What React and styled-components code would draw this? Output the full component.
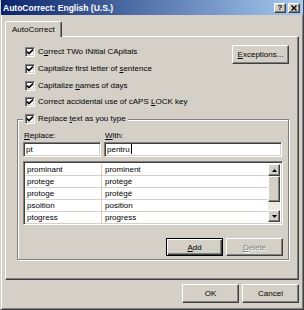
import React from 'react';
import styled, { createGlobalStyle, css } from 'styled-components';

const GlobalStyle = createGlobalStyle`
  html, body { margin: 0; padding: 0; background: #d4d0c8; }
  body { width: 304px; height: 310px; overflow: hidden; font-family: "Liberation Sans", Arial, sans-serif; color: #000; }
  * { box-sizing: border-box; }
`;

const raised = css`
  border: 1px solid;
  border-color: #fff #404040 #404040 #fff;
  box-shadow: inset -1px -1px 0 #808080;
  background: #d4d0c8;
`;

const sunken = css`
  border: 1px solid;
  border-color: #808080 #fff #fff #808080;
  box-shadow: inset 1px 1px 0 #404040, inset -1px -1px 0 #d4d0c8;
  background: #fff;
`;

const Window = styled.div`
  width: 304px;
  height: 310px;
  background: #d4d0c8;
  border-style: solid;
  border-width: 0 1px 1px 1px;
  border-color: #d4d0c8 #404040 #404040 #d4d0c8;
  box-shadow: inset 1px 0 0 #fff, inset -1px -1px 0 #808080;
  display: flex;
  flex-direction: column;
`;

const TitleBar = styled.div`
  height: 15px;
  flex: none;
  display: flex;
  align-items: center;
  justify-content: space-between;
  padding: 0 3px 0 2px;
  background: linear-gradient(to right, #0a246a, #a6caf0);
`;

const TitleText = styled.span`
  color: #fff;
  font-weight: bold;
  font-size: 8.5px;
  white-space: nowrap;
`;

const CaptionButtons = styled.div`
  display: flex;
  gap: 2px;
`;

const CaptionButton = styled.div`
  ${raised};
  width: 12px;
  height: 10px;
  display: flex;
  align-items: center;
  justify-content: center;
  font-size: 8px;
  font-weight: bold;
  line-height: 1;
`;

const Content = styled.div`
  padding: 6px 4px 0 4px;
  display: flex;
  flex-direction: column;
`;

const TabStrip = styled.div`
  display: flex;
  height: 16px;
  position: relative;
  z-index: 1;
  margin-bottom: -1px;
`;

const Tab = styled.div`
  width: 57px;
  height: 16px;
  border: 1px solid;
  border-bottom: none;
  border-color: #fff #404040 transparent #fff;
  box-shadow: inset -1px 0 0 #808080;
  border-radius: 2px 2px 0 0;
  background: #d4d0c8;
  font-size: 8px;
  display: flex;
  align-items: center;
  padding-left: 6px;
  padding-bottom: 1px;
`;

const Panel = styled.div`
  height: 244px;
  border: 1px solid;
  border-color: #fff #404040 #404040 #fff;
  box-shadow: inset -1px -1px 0 #808080;
  padding: 9px 9px 0 11px;
  display: flex;
  flex-direction: column;
  gap: 4.75px;
`;

const TopSection = styled.div`
  display: grid;
  grid-template-columns: 1fr auto;
  align-items: start;
`;

const CheckList = styled.div`
  display: flex;
  flex-direction: column;
  gap: 4.75px;
  padding-left: 8px;
`;

const CheckRow = styled.div`
  display: flex;
  align-items: center;
  gap: 3px;
  height: 12px;
  font-size: 8px;
  white-space: nowrap;
`;

const CheckText = styled.span`
  line-height: 12px;
`;

const Box = styled.span`
  width: 10px;
  height: 10px;
  flex: none;
  border: 1px solid;
  border-color: #808080 #fff #fff #808080;
  box-shadow: inset 1px 1px 0 #404040, inset -1px -1px 0 #d4d0c8;
  background: #fff;
  display: flex;
  align-items: center;
  justify-content: center;
`;

const Button = styled.button`
  ${raised};
  width: ${p => p.$w || 57}px;
  height: ${p => p.$h || 18}px;
  padding: 0;
  font-family: "Liberation Sans", Arial, sans-serif;
  font-size: 8px;
  color: #000;
  margin-top: ${p => p.$mt || 0}px;
  ${p => p.$default && css`
    border: 1px solid #000;
    box-shadow: inset 1px 1px 0 #fff, inset -1px -1px 0 #404040, inset -2px -2px 0 #808080;
  `}
  ${p => p.disabled && css`
    color: #808080;
    text-shadow: 1px 1px 0 #fff;
  `}
`;

const Group = styled.fieldset`
  margin: 0;
  padding: 6px 5px 3px 5px;
  border: 1px solid #808080;
  box-shadow: inset 1px 1px 0 #fff, 1px 1px 0 #fff;
  min-width: 0;
`;

const Legend = styled.legend`
  padding: 0 2px;
  margin-left: 0;
  background: #d4d0c8;
`;

const ReplaceGrid = styled.div`
  display: grid;
  grid-template-columns: 78px 178px;
  column-gap: 3px;
  grid-template-rows: 10px 15px;
  row-gap: 1px;
`;

const FieldLabel = styled.div`
  font-size: 8px;
  line-height: 10px;
  padding-left: 1px;
`;

const TextBox = styled.div`
  ${sunken};
  height: 15px;
  font-size: 8px;
  line-height: 13px;
  padding-left: 2px;
  white-space: nowrap;
`;

const Caret = styled.span`
  display: inline-block;
  width: 1px;
  height: 10px;
  background: #000;
  margin-left: 1px;
  vertical-align: -2px;
`;

const List = styled.div`
  ${sunken};
  margin-top: 4px;
  height: 64px;
  display: flex;
  padding: 2px;
`;

const Rows = styled.div`
  flex: 1;
  display: flex;
  flex-direction: column;
`;

const ListRow = styled.div`
  display: grid;
  grid-template-columns: 76px 1fr;
  height: 12px;
  border-bottom: 1px solid #d4d0c8;
  font-size: 8px;
  line-height: 11px;
`;

const Cell = styled.div`
  padding-left: ${p => (p.$first ? 1 : 3)}px;
  border-right: ${p => (p.$first ? '1px solid #d4d0c8' : 'none')};
  white-space: nowrap;
  overflow: hidden;
`;

const ScrollBar = styled.div`
  width: 12px;
  display: flex;
  flex-direction: column;
  background: #ebe9e4;
`;

const ScrollPart = styled.div`
  ${raised};
  width: 12px;
  height: ${p => p.$h}px;
  flex: none;
  display: flex;
  align-items: center;
  justify-content: center;
`;

const Track = styled.div`
  flex: 1;
`;

const ButtonRow = styled.div`
  display: flex;
  justify-content: flex-end;
  gap: 3px;
  margin-top: ${p => p.$mt || 0}px;
`;

const entries = [
  ['prominant', 'prominent'],
  ['protege', 'protégé'],
  ['protoge', 'protégé'],
  ['psoition', 'position'],
  ['ptogress', 'progress'],
];

const Check = () => (
  <Box>
    <svg width="8" height="8" viewBox="0 0 8 8">
      <polyline points="1,3.6 3,5.6 7,1.6" fill="none" stroke="#000" strokeWidth="1.6" />
    </svg>
  </Box>
);

const CheckItem = ({ children }) => (
  <CheckRow>
    <Check />
    <CheckText>{children}</CheckText>
  </CheckRow>
);

const Arrow = ({ down }) => (
  <svg width="5" height="3" viewBox="0 0 5 3">
    <polygon points={down ? '0,0 5,0 2.5,3' : '0,3 5,3 2.5,0'} fill="#000" />
  </svg>
);

export default function App() {
  return (
    <>
      <GlobalStyle />
      <Window>
        <TitleBar>
          <TitleText>AutoCorrect: English (U.S.)</TitleText>
          <CaptionButtons>
            <CaptionButton>?</CaptionButton>
            <CaptionButton>
              <svg width="6" height="6" viewBox="0 0 6 6">
                <path d="M0.5 0.5 L5.5 5.5 M5.5 0.5 L0.5 5.5" stroke="#000" strokeWidth="1.4" />
              </svg>
            </CaptionButton>
          </CaptionButtons>
        </TitleBar>
        <Content>
          <TabStrip>
            <Tab>AutoCorrect</Tab>
          </TabStrip>
          <Panel>
            <TopSection>
              <CheckList>
                <CheckItem>C<u>o</u>rrect TWo INitial CApitals</CheckItem>
                <CheckItem>Capitalize first letter of <u>s</u>entence</CheckItem>
                <CheckItem>Capitalize <u>n</u>ames of days</CheckItem>
                <CheckItem>Correct accidental use of cAPS <u>L</u>OCK key</CheckItem>
              </CheckList>
              <Button $w={57} $h={19} $mt={-1}><u>E</u>xceptions...</Button>
            </TopSection>
            <Group>
              <Legend>
                <CheckItem>Replace <u>t</u>ext as you type</CheckItem>
              </Legend>
              <ReplaceGrid>
                <FieldLabel><u>R</u>eplace:</FieldLabel>
                <FieldLabel><u>W</u>ith:</FieldLabel>
                <TextBox>pt</TextBox>
                <TextBox>pentru<Caret /></TextBox>
              </ReplaceGrid>
              <List>
                <Rows>
                  {entries.map(([a, b]) => (
                    <ListRow key={a}>
                      <Cell $first>{a}</Cell>
                      <Cell>{b}</Cell>
                    </ListRow>
                  ))}
                </Rows>
                <ScrollBar>
                  <ScrollPart $h={12}><Arrow /></ScrollPart>
                  <ScrollPart $h={26} />
                  <Track />
                  <ScrollPart $h={12}><Arrow down /></ScrollPart>
                </ScrollBar>
              </List>
              <ButtonRow $mt={13}>
                <Button $default><u>A</u>dd</Button>
                <Button disabled><u>D</u>elete</Button>
              </ButtonRow>
            </Group>
          </Panel>
          <ButtonRow $mt={4}>
            <Button $h={19}>OK</Button>
            <Button $h={19}>Cancel</Button>
          </ButtonRow>
        </Content>
      </Window>
    </>
  );
}
